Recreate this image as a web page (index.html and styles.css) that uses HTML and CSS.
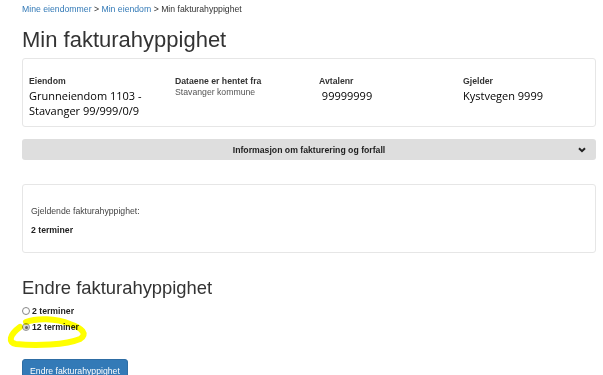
FILE: index.html
```html
<!DOCTYPE html>
<html lang="no">
<head>
<meta charset="utf-8">
<title>Min fakturahyppighet</title>
<link rel="stylesheet" href="styles.css">
</head>
<body>
<div class="page">
  <nav class="crumbs">
    <a href="#">Mine eiendommer</a> <span class="sep">&gt;</span> <a href="#">Min eiendom</a> <span class="sep">&gt;</span> <span class="cur">Min fakturahyppighet</span>
  </nav>
  <h1 class="title">Min fakturahyppighet</h1>

  <section class="card info">
    <div class="col">
      <div class="lbl">Eiendom</div>
      <div class="val">Grunneiendom 1103 -<br>Stavanger 99/999/0/9</div>
    </div>
    <div class="col">
      <div class="lbl">Dataene er hentet fra</div>
      <div class="src">Stavanger kommune</div>
    </div>
    <div class="col">
      <div class="lbl">Avtalenr</div>
      <div class="val">&nbsp;99999999</div>
    </div>
    <div class="col">
      <div class="lbl">Gjelder</div>
      <div class="val">Kystvegen 9999</div>
    </div>
  </section>

  <div class="accordion">
    <span class="acc-text">Informasjon om fakturering og forfall</span>
    <svg class="chev" width="8" height="6" viewBox="0 0 8 6"><path d="M1 1.2 L4 4.2 L7 1.2" fill="none" stroke="#222" stroke-width="2"/></svg>
  </div>

  <section class="card current">
    <div class="cur-lbl">Gjeldende fakturahyppighet:</div>
    <div class="cur-val">2 terminer</div>
  </section>

  <h2 class="sub">Endre fakturahyppighet</h2>
  <form class="choices">
    <label class="opt"><input type="radio" name="t" class="radio"> 2 terminer</label>
    <label class="opt"><input type="radio" name="t" class="radio" checked> 12 terminer</label>
    <svg class="mark" width="100" height="48" viewBox="0 0 100 48"><path d="M26 16 C 36 12, 56 12, 70 18 C 82 22, 88 28, 80 33 C 66 39, 36 40, 16 38 C 8 37, 9 29, 20 21" fill="none" stroke="#ffff00" stroke-width="6" stroke-linecap="round"/></svg>
  </form>
  <button class="btn" type="button">Endre fakturahyppighet</button>
</div>
</body>
</html>
```
FILE: styles.css
```css
html, body { margin: 0; padding: 0; background: #fff; }
body { font-family: "Liberation Sans", Arial, sans-serif; font-size: 8.7px; color: #333; }
.page { padding: 0 7px 0 22px; }
.crumbs { padding-top: 4px; line-height: 10px; color: #333; }
.crumbs a { color: #337ab7; text-decoration: none; }
.title { font-size: 22px; font-weight: normal; line-height: 26px; margin: 13px 0 5px; color: #333; }
.card { border: 1px solid #e6e6e6; border-radius: 3px; box-sizing: border-box; }
.info { height: 69px; display: grid; grid-template-columns: 146px 144px 144px 1fr; padding: 17px 0 0 6px; }
.lbl { font-weight: bold; line-height: 11px; color: #333; }
.val { font-family: "Open Sans", "Noto Sans", sans-serif; font-size: 11px; line-height: 15px; color: #000; margin-top: 1px; }
.src { color: #555; line-height: 11px; }
.accordion { margin-top: 12px; height: 21px; background: #dedede; border-radius: 3px; display: flex; align-items: center; justify-content: center; position: relative; }
.acc-text { font-weight: bold; color: #222; }
.chev { position: absolute; right: 10px; top: 8px; }
.current { margin-top: 24px; height: 69px; padding: 20px 0 0 8px; }
.cur-lbl { color: #444; line-height: 12px; }
.cur-val { font-weight: bold; margin-top: 7px; line-height: 12px; color: #222; }
.sub { font-size: 18.4px; font-weight: normal; line-height: 22px; margin: 24px 0 4px; color: #333; }
.choices { position: relative; }
.opt { display: flex; align-items: center; gap: 2px; font-weight: bold; line-height: 12px; height: 16px; color: #222; }
.radio { -webkit-appearance: none; appearance: none; width: 8px; height: 8px; margin: 0; border: 1px solid #888; border-radius: 50%; background: #fff; box-sizing: border-box; position: relative; }
.radio:checked { background: #d8d8d8; border-color: #999; }
.radio:checked::after { content: ""; position: absolute; left: 1.5px; top: 1.5px; width: 3px; height: 3px; border-radius: 50%; background: #666; }
.mark { position: absolute; left: -22px; top: 3px; pointer-events: none; mix-blend-mode: multiply; }
.btn { margin-top: 24px; background: #337ab7; border: 1px solid #2e6da4; border-radius: 3px; color: #fff; font-family: "Liberation Sans", Arial, sans-serif; font-size: 8.7px; padding: 5px 7px 8px; height: 26px; }
```
